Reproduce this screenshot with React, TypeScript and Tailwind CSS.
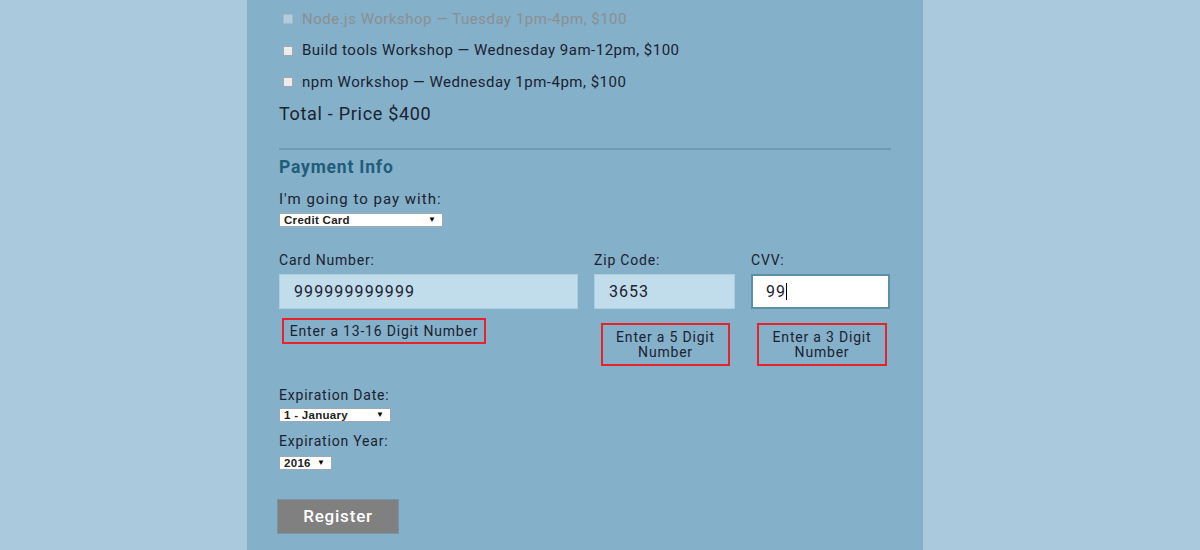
const workshops = [
  { label: "Node.js Workshop — Tuesday 1pm-4pm, $100", disabled: true },
  { label: "Build tools Workshop — Wednesday 9am-12pm, $100", disabled: false },
  { label: "npm Workshop — Wednesday 1pm-4pm, $100", disabled: false },
];

const FakeSelect = ({ value, width }: { value: string; width: string }) => {
  return (
    <div className={`relative h-[14px] ${width} bg-white border border-[#9aa9b3] flex items-center justify-between pl-[4px] pr-[6px]`}>
      <span className="text-[11.5px] font-bold tracking-[0.3px] leading-none text-[#222] font-['Liberation_Sans',sans-serif]">{value}</span>
      <span className="text-[8px] leading-none text-black">▼</span>
    </div>
  );
};

const ErrorBox = ({ children, className }: { children: React.ReactNode; className: string }) => (
  <div className={`border-2 border-[#e8222a] text-[14px] leading-[15px] tracking-[0.8px] text-[#1b2230] text-center flex items-center justify-center ${className}`}>
    {children}
  </div>
);

export default function App() {
  return (
    <div className="w-[1200px] h-[550px] bg-[#abc9dc] flex pl-[247px] overflow-hidden font-['Roboto',sans-serif]">
      <div className="w-[676px] h-full bg-[#84b0c9] px-[32px] text-[#1b2230]">
        <div className="pt-[11px] flex flex-col gap-[15.5px]">
          {workshops.map((w) => (
            <div key={w.label} className="flex items-center h-[16px]">
              <span className={`w-[10px] h-[10px] ml-[4px] mr-[9px] border ${w.disabled ? "border-[#9fbccc] bg-[#b5cdda]" : "border-[#a7a7a7] bg-[#ececec]"}`} />
              <span className={`text-[15px] tracking-[0.5px] ${w.disabled ? "text-[#8b8f92]" : "text-[#1b2230]"}`}>{w.label}</span>
            </div>
          ))}
        </div>
        <div className="mt-[14px] text-[18px] leading-[20px] tracking-[0.7px]">Total - Price $400</div>

        <div className="mt-[24px] border-t-2 border-[#6d9cb8]" />
        <div className="mt-[4px] text-[17.5px] font-bold text-[#1f5d7a] tracking-[0.8px]">Payment Info</div>

        <div className="mt-[10px] text-[15px] leading-[18px] tracking-[1px]">I'm going to pay with:</div>
        <div className="mt-[5px]">
          <FakeSelect value="Credit Card" width="w-[164px]" />
        </div>

        <div className="mt-[24px] flex gap-[16px]">
          <div className="w-[299px] flex flex-col">
            <div className="text-[14px] leading-[18px] tracking-[0.8px]">Card Number:</div>
            <div className="mt-[5px] h-[35px] bg-[#c1dceb] border border-[#acd0e2] flex items-center pl-[14px] text-[16px] tracking-[1.1px]">999999999999</div>
            <ErrorBox className="mt-[9px] ml-[3px] w-[204px] h-[26px]">Enter a 13-16 Digit Number</ErrorBox>
          </div>
          <div className="w-[141px] flex flex-col">
            <div className="text-[14px] leading-[18px] tracking-[0.8px]">Zip Code:</div>
            <div className="mt-[5px] h-[35px] bg-[#c1dceb] border border-[#acd0e2] flex items-center pl-[14px] text-[16px] tracking-[1px]">3653</div>
            <ErrorBox className="mt-[14px] ml-[7px] w-[129px] h-[43px]">
              Enter a 5 Digit
              <br />
              Number
            </ErrorBox>
          </div>
          <div className="w-[139px] flex flex-col">
            <div className="text-[14px] leading-[18px] tracking-[0.8px]">CVV:</div>
            <div className="mt-[5px] h-[35px] bg-white border-2 border-[#5d8fa9] flex items-center pl-[13px] text-[16px] tracking-[1px]">
              99<span className="w-px h-[17px] bg-black" />
            </div>
            <ErrorBox className="mt-[14px] ml-[6px] w-[130px] h-[43px]">
              Enter a 3 Digit
              <br />
              Number
            </ErrorBox>
          </div>
        </div>

        <div className="mt-[20px] text-[14px] leading-[18px] tracking-[0.8px]">Expiration Date:</div>
        <div className="mt-[4px]">
          <FakeSelect value="1 - January" width="w-[112px]" />
        </div>
        <div className="mt-[10px] text-[14px] leading-[18px] tracking-[0.8px]">Expiration Year:</div>
        <div className="mt-[6px]">
          <FakeSelect value="2016" width="w-[53px]" />
        </div>

        <button className="mt-[29px] -ml-[2px] w-[122px] h-[35px] bg-[#808080] border border-[#7994a3] text-white text-[17px] tracking-[0.8px] font-medium flex items-center justify-center">
          Register
        </button>
      </div>
    </div>
  );
}
